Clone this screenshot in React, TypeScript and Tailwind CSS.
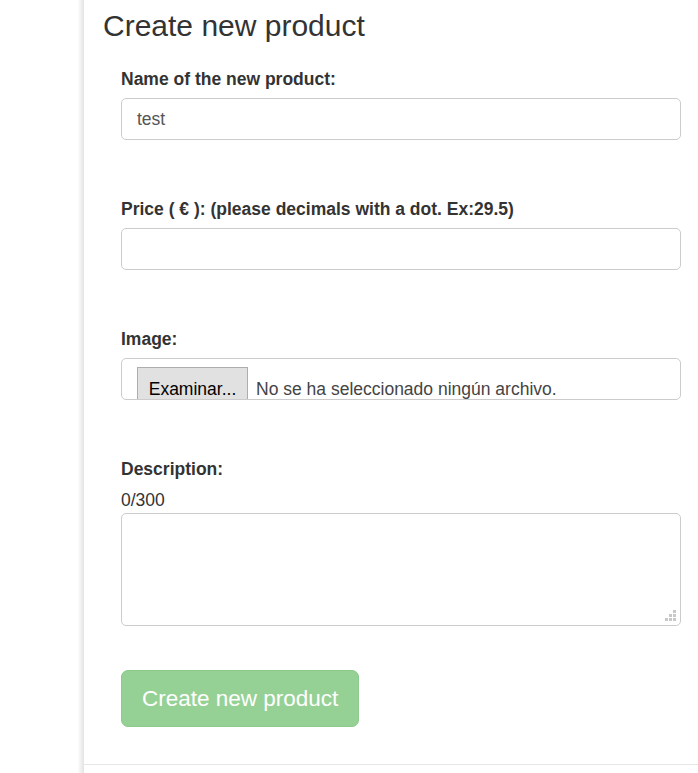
import React from "react";

function ResizeDots() {
  const dots: [number, number][] = [
    [8, 0],
    [4, 4],
    [8, 4],
    [0, 8],
    [4, 8],
    [8, 8],
  ];
  return (
    <svg width="11" height="11" viewBox="0 0 11 11" className="absolute right-[4px] bottom-[4px]">
      {dots.map(([x, y], i) => (
        <rect key={i} x={x} y={y} width="3" height="3" fill="#c8c8c8" />
      ))}
    </svg>
  );
}

export default function App() {
  return (
    <div
      className="flex w-[698px] h-[773px] bg-white text-[#333] overflow-hidden"
      style={{ fontFamily: '"Liberation Sans", Arial, Helvetica, sans-serif' }}
    >
      <div className="w-[78px] shrink-0 bg-white" />
      <div className="w-[6px] shrink-0 bg-linear-to-r from-[#fcfcfc] to-[#e4e4e4]" />
      <div className="flex-1 flex flex-col">
        <div className="border-b border-[#e6e6e6] pb-[37px]">
          <h3 className="pl-[19px] pt-[9px] text-[30px] leading-[33px] font-normal text-[#333]">
            Create new product
          </h3>
          <form className="pl-[37px] pr-[17px] pt-[25px] text-[17.5px] leading-[25px]">
            <div>
              <label className="block font-bold mb-[6px]">Name of the new product:</label>
              <div className="h-[42px] border border-[#ccc] rounded-[5px] px-[15px] flex items-center text-[#555]">
                test
              </div>
            </div>

            <div className="mt-[57px]">
              <label className="block font-bold mb-[6px]">
                Price ( € ): (please decimals with a dot. Ex:29.5)
              </label>
              <div className="h-[42px] border border-[#ccc] rounded-[5px]" />
            </div>

            <div className="mt-[57px]">
              <label className="block font-bold mb-[6px]">Image:</label>
              <div className="h-[42px] border border-[#ccc] rounded-[5px] overflow-hidden flex items-start pl-[15px] pt-[8px]">
                <div className="w-[111px] h-[40px] shrink-0 border border-[#adadad] bg-[#e1e1e1] text-center text-black pt-[9px]">
                  Examinar...
                </div>
                <span className="pl-[8px] pt-[10px] text-[#444]">
                  No se ha seleccionado ningún archivo.
                </span>
              </div>
            </div>

            <div className="mt-[57px]">
              <label className="block font-bold mb-[6px]">Description:</label>
              <div>0/300</div>
              <div className="relative h-[113px] border border-[#ccc] rounded-[5px]">
                <ResizeDots />
              </div>
            </div>

            <div className="mt-[44px]">
              <div className="inline-block bg-[#95d195] border border-[#8bca8b] rounded-[7px] text-white text-[22.5px] leading-[30px] px-[20px] py-[12.5px]">
                Create new product
              </div>
            </div>
          </form>
        </div>
      </div>
    </div>
  );
}
